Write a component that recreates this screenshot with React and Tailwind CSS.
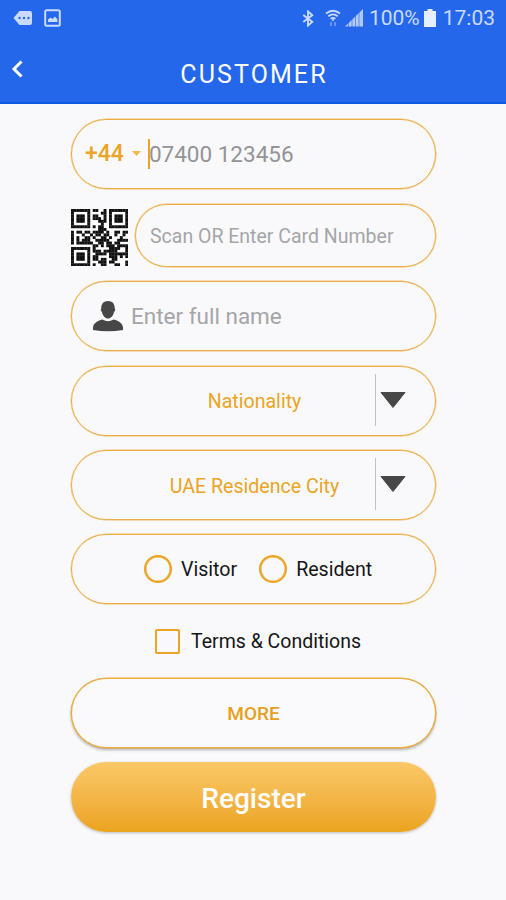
import { useState } from 'react';

const QR_ROWS = [
  '111111101100101111111',
  '100000100001101000001',
  '101110101100101011101',
  '101110101110101011101',
  '101110100011101011101',
  '100000100001001000001',
  '111111101011001111111',
  '000000000011100000000',
  '101101101111010011011',
  '100010010110110010010',
  '101001101001101000100',
  '101011100111110001111',
  '101111110011011011000',
  '000000001101011101111',
  '111111101000001111001',
  '100000101110111110001',
  '101110100111101111111',
  '101110101100001110101',
  '101110101101100110000',
  '100000100011101100001',
  '111111101001100011001',
];

function QrCode() {
  return (
    <svg viewBox="0 0 21 21" className="mt-[5px] h-[57px] w-[57px] shrink-0" shapeRendering="geometricPrecision">
      <rect width="21" height="21" fill="#fff" />
      {QR_ROWS.map((row, y) =>
        row.split('').map((cell, x) =>
          cell === '1' ? <rect key={`${x}-${y}`} x={x} y={y} width="1.08" height="1.08" fill="#111" /> : null
        )
      )}
    </svg>
  );
}

function StatusBar() {
  return (
    <div className="flex h-9 items-center justify-between pr-[11px] pl-[13px] text-[#c9dafc]">
      <div className="flex items-center gap-[11px]">
        <svg viewBox="0 0 20 16" className="h-4 w-5">
          <path d="M6.500 1H17a2 2 0 0 1 2 2v10a2 2 0 0 1-2 2H6.500L.5 8Z" fill="currentColor" />
          <circle cx="6.500" cy="8" r="1.200" fill="#2467eb" />
          <circle cx="11" cy="8" r="1.200" fill="#2467eb" />
          <circle cx="15.500" cy="8" r="1.200" fill="#2467eb" />
        </svg>
        <svg viewBox="0 0 17 18" className="h-[18px] w-[17px]">
          <rect x="1.200" y="1.200" width="14.600" height="15.600" rx="1.500" fill="none" stroke="currentColor" strokeWidth="2" />
          <path d="M4 13V10.500l2.500-2 2 1.500L11 7.500l2.500 3V13Z" fill="currentColor" />
        </svg>
      </div>
      <div className="flex items-center">
        <svg viewBox="0 0 12 18" className="mr-[11px] h-[17px] w-3">
          <path d="M1 5.200 10.500 12.500 6 16.500V1.500L10.500 5.500 1 12.800" fill="none" stroke="currentColor" strokeWidth="2" />
        </svg>
        <svg viewBox="0 0 16 18" className="mr-1 h-[18px] w-4">
          <path d="M1 4.500Q8-1 15 4.500M3.300 7.300Q8 3.500 12.700 7.300M5.600 9.800Q8 8 10.400 9.800" fill="none" stroke="currentColor" strokeWidth="1.800" />
          <circle cx="8" cy="11" r="1" fill="currentColor" />
          <path d="M6 13v4M10 13v4" stroke="currentColor" strokeWidth="2" opacity=".4" />
        </svg>
        <svg viewBox="0 0 18 18" className="mr-[6px] h-[18px] w-[18px]">
          <path d="M0 17.500 18 0v17.500Z" fill="currentColor" opacity=".85" />
          <path d="M3.500 18V13M7 18V10M10.500 18V7M14 18V3" stroke="#2467eb" strokeWidth=".6" />
        </svg>
        <span className="text-[21px] leading-none">100%</span>
        <svg viewBox="0 0 12 18" className="mr-[7px] ml-[4px] h-[18px] w-3">
          <path d="M3.500 0h5v2H12v16H0V2h3.500Z" fill="#e6effe" />
        </svg>
        <span className="text-[21px] leading-none">17:03</span>
      </div>
    </div>
  );
}

function Header() {
  return (
    <header className="h-[104px] border-b-2 border-[#105be6] bg-[#2467eb]">
      <StatusBar />
      <div className="grid h-[66px] grid-cols-[40px_1fr_40px] items-center">
        <button type="button" aria-label="Back" className="mb-[1px] ml-[11px] w-3">
          <svg viewBox="0 0 12 18" className="h-[18px] w-3">
            <path d="M10.500 1.500 3 9l7.500 7.500" fill="none" stroke="#fff" strokeWidth="3" />
          </svg>
        </button>
        <h1 className="pt-[11px] pl-[2px] text-center text-[25px] leading-none tracking-[2.100px] text-white">CUSTOMER</h1>
      </div>
    </header>
  );
}

function SelectField({ label }) {
  return (
    <button type="button" className="flex h-[70px] w-full items-center rounded-full border border-[#ebac42] shadow-[0_0_0_0.5px_#f0bd6a]">
      <span className="flex-1 pt-[3px] pl-[62px] text-center text-[19.600px] text-[#eba423]">{label}</span>
      <span className="mb-[2px] h-[52px] w-px bg-[#c0c0c3]" />
      <svg viewBox="0 0 26 16" className="mr-[29px] mb-[2px] ml-[4px] h-4 w-[26px]">
        <path d="M1 .5h24L13 15.500Z" fill="#474747" stroke="#474747" strokeLinejoin="round" />
      </svg>
    </button>
  );
}

export default function App() {
  const [type, setType] = useState('');
  const [accepted, setAccepted] = useState(false);

  return (
    <div className="h-[900px] w-[506px] overflow-hidden bg-[#f9f9fc] font-['Roboto',sans-serif]">
      <Header />
      <form className="mt-[14.500px] ml-[71px] flex w-[365px] flex-col">
        <div className="flex h-[70px] items-center rounded-full border border-[#ebac42] pl-[13px] text-[22.500px] shadow-[0_0_0_0.5px_#f0bd6a]">
          <span className="pt-[2px] text-[23px] font-medium text-[#eba423]">+44</span>
          <svg viewBox="0 0 9 5" className="ml-[8px] h-[5px] w-[9px]">
            <path d="M0 0h9L4.500 5Z" fill="#f0b850" />
          </svg>
          <span className="ml-[7px] h-[30px] w-[2px] bg-[#eba423]" />
          <span className="-ml-px pt-[2px] text-[#949496]">07400 123456</span>
        </div>

        <div className="mt-[14.500px] flex h-[64px] items-center justify-between">
          <QrCode />
          <div className="flex h-[63px] w-[301px] items-center rounded-full border border-[#ebac42] pt-[3px] pl-[14px] text-[19.500px] text-[#a5a5a8] shadow-[0_0_0_0.5px_#f0bd6a]">
            Scan OR Enter Card Number
          </div>
        </div>

        <div className="mt-[14px] flex h-[70px] items-center rounded-full border border-[#ebac42] pl-[20px] text-[22.500px] text-[#a5a5a8] shadow-[0_0_0_0.5px_#f0bd6a]">
          <svg viewBox="0 0 32 32" className="mr-[7px] h-8 w-8">
            <path d="M16 1c4.500 0 7 3 6.700 7.500 1 .5.500 3-.7 3.500-.7 4-3.300 6.500-6 6.500s-5.300-2.500-6-6.500c-1.200-.5-1.700-3-.7-3.500C9 4 11.500 1 16 1Z" fill="#474747" />
            <path d="M10.500 19.500q5.500 3.500 11 0c5.500 1.500 9 3.500 9.500 8v2.500q-15 2.500-30 0v-2.500c.5-4.500 4-6.500 9.500-8Z" fill="#474747" />
          </svg>
          <span className="pt-[2px]">Enter full name</span>
        </div>

        <div className="mt-[14.500px] flex flex-col gap-[14.500px]">
          <SelectField label="Nationality" />
          <SelectField label="UAE Residence City" />
        </div>

        <div className="mt-[14px] flex h-[70px] items-center rounded-full border border-[#ebac42] pl-[72px] text-[19.600px] text-[#161616] shadow-[0_0_0_0.5px_#f0bd6a]">
          {['Visitor', 'Resident'].map((option) => (
            <button key={option} type="button" className="mr-[22px] flex items-center gap-[9px]" onClick={() => setType(option)}>
              <span className="flex h-7 w-7 items-center justify-center rounded-full border-2 border-[#eba423] shadow-[inset_0_0_0_0.5px_#eba423]">
                {type === option && <span className="h-3 w-3 rounded-full bg-[#eba423]" />}
              </span>
              <span className="pt-[2px]">{option}</span>
            </button>
          ))}
        </div>

        <button
          type="button"
          className="mt-[22px] ml-[84px] flex h-[30px] items-center text-[19.500px] text-[#161616]"
          onClick={() => setAccepted(!accepted)}
        >
          <span className="mr-[11px] flex h-[25px] w-[25px] items-center justify-center rounded-[2px] border-2 border-[#eba423]">
            {accepted && <span className="h-3 w-3 bg-[#eba423]" />}
          </span>
          <span className="pt-[1px]">Terms &amp; Conditions</span>
        </button>

        <button
          type="button"
          className="mt-[22px] h-[70px] rounded-full border border-[#ebac42] bg-[#fafafc] pt-[2px] text-[19px] font-medium text-[#e5a021] shadow-[0_0_0_0.5px_#ebac42,0_2px_3px_rgba(0,0,0,0.3)]"
        >
          MORE
        </button>
        <button
          type="button"
          className="mt-[14px] h-[70px] rounded-full bg-linear-to-b from-[#fac866] to-[#eba41c] pt-[3px] text-[28px] font-medium text-white shadow-[0_1px_3px_rgba(0,0,0,0.25)]"
        >
          Register
        </button>
      </form>
    </div>
  );
}
